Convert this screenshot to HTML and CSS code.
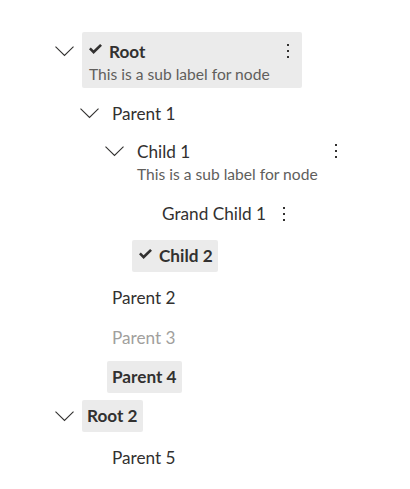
FILE: index.html
```html
<!DOCTYPE html>
<html lang="en">
<head>
<meta charset="utf-8">
<title>Tree</title>
<link rel="stylesheet" href="styles.css">
</head>
<body>
<ul class="tree">
  <li class="item">
    <div class="row">
      <span class="toggle"><svg class="chev" width="19" height="10" viewBox="0 0 19 10"><polyline points="0.5,0.6 9.5,9.4 18.5,0.6"/></svg></span>
      <div class="node two sel">
        <div class="content">
          <div class="main"><svg class="check" width="13" height="10" viewBox="0 0 13 10"><path d="M0 5.3 L1.8 3.5 L4.6 6.2 L11.1 0 L13 1.8 L4.6 10 Z"/></svg><span class="label strong">Root</span></div>
          <div class="sub">This is a sub label for node</div>
        </div>
        <span class="more"><svg width="2" height="14" viewBox="0 0 2 14"><rect x="0" y="0" width="2" height="2"/><rect x="0" y="6" width="2" height="2"/><rect x="0" y="12" width="2" height="2"/></svg></span>
      </div>
    </div>
    <ul class="group">
      <li class="item">
        <div class="row">
          <span class="toggle"><svg class="chev" width="19" height="10" viewBox="0 0 19 10"><polyline points="0.5,0.6 9.5,9.4 18.5,0.6"/></svg></span>
          <div class="node"><div class="content"><div class="main"><span class="label">Parent 1</span></div></div></div>
        </div>
        <ul class="group end">
          <li class="item">
            <div class="row">
              <span class="toggle"><svg class="chev" width="19" height="10" viewBox="0 0 19 10"><polyline points="0.5,0.6 9.5,9.4 18.5,0.6"/></svg></span>
              <div class="node two">
                <div class="content">
                  <div class="main"><span class="label">Child 1</span></div>
                  <div class="sub">This is a sub label for node</div>
                </div>
                <span class="more"><svg width="2" height="14" viewBox="0 0 2 14"><rect x="0" y="0" width="2" height="2"/><rect x="0" y="6" width="2" height="2"/><rect x="0" y="12" width="2" height="2"/></svg></span>
              </div>
            </div>
            <ul class="group end">
              <li class="item">
                <div class="row">
                  <span class="toggle"></span>
                  <div class="node">
                    <div class="content"><div class="main"><span class="label">Grand Child 1</span></div></div>
                    <span class="more"><svg width="2" height="14" viewBox="0 0 2 14"><rect x="0" y="0" width="2" height="2"/><rect x="0" y="6" width="2" height="2"/><rect x="0" y="12" width="2" height="2"/></svg></span>
                  </div>
                </div>
              </li>
            </ul>
          </li>
          <li class="item">
            <div class="row">
              <span class="toggle"></span>
              <div class="node sel checked">
                <div class="content"><div class="main"><svg class="check" width="13" height="10" viewBox="0 0 13 10"><path d="M0 5.3 L1.8 3.5 L4.6 6.2 L11.1 0 L13 1.8 L4.6 10 Z"/></svg><span class="label strong">Child 2</span></div></div>
              </div>
            </div>
          </li>
        </ul>
      </li>
      <li class="item">
        <div class="row"><span class="toggle"></span><div class="node"><div class="content"><div class="main"><span class="label">Parent 2</span></div></div></div></div>
      </li>
      <li class="item">
        <div class="row"><span class="toggle"></span><div class="node disabled"><div class="content"><div class="main"><span class="label">Parent 3</span></div></div></div></div>
      </li>
      <li class="item">
        <div class="row"><span class="toggle"></span><div class="node sel"><div class="content"><div class="main"><span class="label strong">Parent 4</span></div></div></div></div>
      </li>
    </ul>
  </li>
  <li class="item">
    <div class="row">
      <span class="toggle"><svg class="chev" width="19" height="10" viewBox="0 0 19 10"><polyline points="0.5,0.6 9.5,9.4 18.5,0.6"/></svg></span>
      <div class="node sel"><div class="content"><div class="main"><span class="label strong">Root 2</span></div></div></div>
    </div>
    <ul class="group">
      <li class="item">
        <div class="row"><span class="toggle"></span><div class="node"><div class="content"><div class="main"><span class="label">Parent 5</span></div></div></div></div>
      </li>
    </ul>
  </li>
</ul>
</body>
</html>
```

FILE: styles.css
```css
* { box-sizing: border-box; }

body {
  margin: 0;
  background: #ffffff;
  color: #323130;
  font-family: Lato, "Noto Sans", sans-serif;
  font-size: 17.2px;
}

.tree,
.group {
  list-style: none;
  margin: 0;
  display: flex;
  flex-direction: column;
  gap: 7.3px;
}

.tree {
  padding: 32px 0 0 55px;
}

.group {
  padding: 0 0 0 25px;
  margin-top: 9.6px;
}

.group.end {
  margin-bottom: 2.7px;
}

.row {
  display: flex;
  align-items: baseline;
}

.toggle {
  flex: none;
  width: 27px;
  line-height: 24px;
}

.chev {
  vertical-align: 1.3px;
  overflow: visible;
}

.chev polyline {
  fill: none;
  stroke: #323130;
  stroke-width: 1.1;
}

.node {
  display: flex;
  align-items: baseline;
  padding: 4px 5px;
  border-radius: 2px;
}

.node.two {
  padding: 0.5px 0 5px 5px;
}

.node.two.sel {
  padding: 7.5px 0 4.5px 7px;
}

.node.sel {
  background: #ebebeb;
}

.node.checked {
  padding-left: 7px;
}

.main {
  line-height: 24px;
  white-space: nowrap;
}

.label.strong {
  font-weight: 700;
}

.check {
  margin-right: 7px;
  vertical-align: 3.5px;
  fill: #323130;
}

.sub {
  font-size: 15.6px;
  line-height: 20px;
  color: #605e5c;
  white-space: nowrap;
}

.disabled .label {
  color: #a19f9d;
}

.more {
  flex: none;
  width: 27px;
  margin-left: 5px;
  text-align: center;
  line-height: 24px;
}

.more svg {
  fill: #323130;
  vertical-align: -0.7px;
}
```
